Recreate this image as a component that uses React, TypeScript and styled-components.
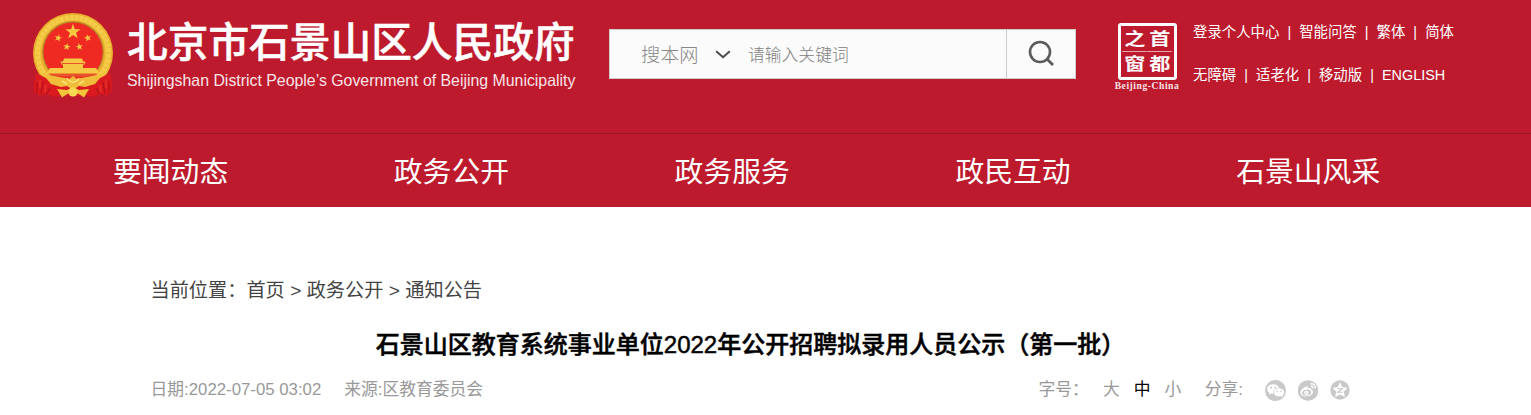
import styled, { createGlobalStyle } from 'styled-components';

const topLinks = [
    ['登录个人中心', '智能问答', '繁体', '简体'],
    ['无障碍', '适老化', '移动版', 'ENGLISH'],
];

const menus = ['要闻动态', '政务公开', '政务服务', '政民互动', '石景山风采'];

const sizes = ['大', '中', '小'];

export default function App() {
    return (
        <>
            <GlobalStyle />
            <Header>
                <TopBar>
                    <Emblem />
                    <Brand>
                        <BrandName>北京市石景山区人民政府</BrandName>
                        <BrandSub>Shijingshan District People’s Government of Beijing Municipality</BrandSub>
                    </Brand>
                    <Search>
                        <Scope>
                            搜本网
                            <svg width="16" height="9" viewBox="0 0 16 9" fill="none">
                                <path d="M1.2 1.2 8 7.2l6.8-6" stroke="#4a4a4a" strokeWidth="2" />
                            </svg>
                        </Scope>
                        <Keyword placeholder="请输入关键词" />
                        <SearchButton>
                            <svg width="28" height="28" viewBox="0 0 28 28" fill="none" stroke="#5b5b5b">
                                <circle cx="13" cy="12" r="10" strokeWidth="2.6" />
                                <path d="m20.2 19.2 5.800 5.800" strokeWidth="2.8" />
                            </svg>
                        </SearchButton>
                    </Search>
                    <Capital>
                        <Seal>
                            <SealCell>之</SealCell>
                            <SealCell>首</SealCell>
                            <SealCell>窗</SealCell>
                            <SealCell>都</SealCell>
                        </Seal>
                        <SealCaption>Beijing-China</SealCaption>
                    </Capital>
                    <Links>
                        {topLinks.map((row) => (
                            <LinkRow key={row[0]}>
                                {row.map((text) => (
                                    <LinkItem key={text}>{text}</LinkItem>
                                ))}
                            </LinkRow>
                        ))}
                    </Links>
                </TopBar>
                <Nav>
                    {menus.map((menu) => (
                        <NavItem key={menu}>{menu}</NavItem>
                    ))}
                </Nav>
            </Header>
            <Article>
                <Crumbs>当前位置：首页 &gt; 政务公开 &gt; 通知公告</Crumbs>
                <Title>石景山区教育系统事业单位2022年公开招聘拟录用人员公示（第一批）</Title>
                <Meta>
                    <span>日期:2022-07-05 03:02</span>
                    <Source>来源:区教育委员会</Source>
                    <SizeLabel>字号：</SizeLabel>
                    <Sizes>
                        {sizes.map((size) => (
                            <Size key={size} $active={size === '中'}>
                                {size}
                            </Size>
                        ))}
                    </Sizes>
                    <span>分享:</span>
                    <Share>
                        <WechatIcon />
                        <WeiboIcon />
                        <QzoneIcon />
                    </Share>
                </Meta>
            </Article>
        </>
    );
}

// 国徽
function Emblem() {
    const star = 'M0-1 .235-.324.951-.309.38.124.588.809 0 .4-.588.809-.38.124-.951-.309-.235-.324Z';

    return (
        <EmblemSvg width="82" height="88" viewBox="0 0 82 88">
            <circle cx="41" cy="41" r="40" fill="#e9b02e" />
            <circle cx="41" cy="41" r="35.5" fill="none" stroke="#f4cc48" strokeWidth="5.5" />
            <circle cx="41" cy="41" r="36" fill="none" stroke="#e3a52a" strokeWidth="5" strokeDasharray="1 4" opacity=".4" />
            <circle cx="41" cy="40" r="30.8" fill="#b98326" />
            <circle cx="41" cy="40" r="29.6" fill="#ee2a22" />
            <g fill="#f6c945">
                <path d={star} transform="translate(41 19.8) scale(8)" />
                <path d={star} transform="translate(26.2 26) rotate(15) scale(3.9)" />
                <path d={star} transform="translate(55.8 26) rotate(-15) scale(3.9)" />
                <path d={star} transform="translate(34.8 34.8) rotate(10) scale(3.9)" />
                <path d={star} transform="translate(47.4 34.8) rotate(-10) scale(3.9)" />
                <path d="M32 46.5h18l1 3h2.500l-1 3h-1.500v3.500h13l4 6.500H14l4-6.500h13v-3.500h-1.500l-1-3H31Z" />
            </g>
            <path d="M16 61.5h50l-4 3H20zM30 51h22v1H30z" fill="#e8542a" />
            <path
                d="M4 61 2 72l.5 8.5 6 3 6-2 8 3.500 8-2 11 1 11-1 8 2 8-3.500 6 2 5-3L80 72l-2-11-12 6-10 3H26l-10-3Z"
                fill="#da1a1f"
            />
            <path d="m10 61 11 3 12 2 4 1 4-3 4 3 4-1 12-2 11-3-9 11-10 3-6-1-6 4-6-4-6 1-10-3Z" fill="#efbd3a" />
            <path d="m25 77 10 1 6-3 6 3 10-1-5 8.500-6-4-5 3-5-3-6 4Z" fill="#f3c53a" />
            <path d="M35 66q2 4 6 4t6-4M30 69l5 3M52 69l-5 3" stroke="#fbe27a" strokeWidth="1.5" fill="none" />
            <circle cx="41" cy="80" r="4.5" fill="#f8d850" />
            <path
                d="M5 70v11M11 70l-2 12M18 76l-3 6M77 70v11M71 70l2 12M64 76l3 6"
                stroke="#b8121c"
                strokeWidth="1.4"
            />
            <path d="M8 68v8M14 73l-1 7M74 68v8M68 73l1 7" stroke="#ec3a2e" strokeWidth="1.2" />
        </EmblemSvg>
    );
}

function WechatIcon() {
    return (
        <svg width="21" height="21" viewBox="0 0 21 21">
            <circle cx="10.5" cy="10.5" r="10.5" fill="#c9c9c9" />
            <path
                d="M8.2 4.2c-3.3 0-6 2-6 4.8 0 1.6.9 2.9 2.3 3.8L4 14.7l2.200-1.100 2 .3C8 10 10.5 7.7 14 7.7 13.5 5.6 11.2 4.2 8.2 4.2Z"
                fill="#fff"
            />
            <ellipse cx="14" cy="12.4" rx="5.1" ry="4.2" fill="#fff" />
            <path d="m15 15.5 3 2-.6-3Z" fill="#fff" />
            <g fill="#c9c9c9">
                <circle cx="6.2" cy="7.5" r=".9" />
                <circle cx="10.2" cy="7.5" r=".9" />
                <circle cx="12.3" cy="11.3" r=".8" />
                <circle cx="15.8" cy="11.3" r=".8" />
            </g>
        </svg>
    );
}

function WeiboIcon() {
    return (
        <svg width="20" height="21" viewBox="0 0 20 21">
            <circle cx="10" cy="10.5" r="10.3" fill="#c9c9c9" />
            <path
                d="M8 6.6c1.6-.6 2.4.1 2 1.7 2.2-.8 3.7-.3 3.2 1.5 3.2 1.2 2 5-2.2 6.3-4.5 1.3-8.6-.5-8.6-3.4C2.4 10.4 5.4 7.5 8 6.6Z"
                fill="#fff"
            />
            <ellipse cx="8.6" cy="12.6" rx="4.5" ry="3" transform="rotate(-10 8.6 12.6)" fill="#c9c9c9" />
            <circle cx="8.3" cy="12.9" r="2.2" fill="#fff" />
            <circle cx="7.9" cy="13.2" r=".8" fill="#c9c9c9" />
            <path
                d="M12.5 3.8c3.2-.5 5.4 2 4.5 5M12.7 6.2c1.5-.2 2.4.8 2 2.2"
                stroke="#fff"
                strokeWidth="1.3"
                fill="none"
            />
        </svg>
    );
}

function QzoneIcon() {
    return (
        <svg width="20" height="21" viewBox="0 0 20 21">
            <circle cx="10" cy="10" r="9.7" fill="#c9c9c9" />
            <path
                d="m10 3.2 2 4.5 4.9.5-3.6 3.3 1 4.8L10 13.9l-4.3 2.4 1-4.8-3.600-3.300 4.900-.5Z"
                fill="#fff"
                stroke="#fff"
                strokeLinejoin="round"
            />
            <path d="M7.2 8.8h5l-4.400 3.500h5" stroke="#c9c9c9" strokeWidth="1.1" fill="none" />
        </svg>
    );
}

const GlobalStyle = createGlobalStyle`
    body {
        margin: 0;
        background: #fff;
        font-family: 'Liberation Sans', 'Noto Sans CJK SC', sans-serif;
    }

    * {
        box-sizing: border-box;
    }

    svg {
        display: block;
        flex: none;
    }
`;

const Header = styled.header`
    height: 207px;
    background: #bd1a2d;
    color: #fff;
`;

const TopBar = styled.div`
    height: 133px;
    display: flex;
    align-items: flex-start;
    padding-left: 32px;
`;

const EmblemSvg = styled.svg`
    margin-top: 12px;
`;

const Brand = styled.div`
    width: 482px;
    margin-left: 13px;
    padding-top: 19px;
    white-space: nowrap;
`;

const BrandName = styled.div`
    height: 48px;
    line-height: 48px;
    font-size: 40.7px;
    font-weight: 500;
    -webkit-text-stroke: 0.5px #fff;
`;

const BrandSub = styled.div`
    height: 28px;
    line-height: 28px;
    color: #f9e3e6;
    font-size: 15.86px;
`;

const Search = styled.div`
    width: 467px;
    height: 50px;
    margin-top: 29px;
    display: flex;
    background: #fbfbfb;
    border: 1px solid #ccc;
`;

const Scope = styled.div`
    width: 138px;
    padding-left: 31px;
    display: flex;
    align-items: center;
    gap: 16px;
    color: #888;
    font-size: 19.2px;
    font-weight: 300;
`;

const Keyword = styled.input`
    width: 258px;
    padding: 3px 0 0;
    border: 0;
    outline: 0;
    background: transparent;
    font-family: inherit;
    font-size: 16.8px;
    font-weight: 300;

    &::placeholder {
        color: #808080;
    }
`;

const SearchButton = styled.div`
    flex: 1;
    padding: 10px 0 0 20px;
    border-left: 1px solid #ccc;
`;

const Capital = styled.div`
    width: 66px;
    margin: 23px 0 0 38px;
    display: flex;
    flex-direction: column;
    align-items: center;
`;

// 首都之窗 印章
const Seal = styled.div`
    width: 59px;
    height: 57px;
    padding: 1px;
    display: grid;
    grid-template-columns: 1fr 1fr;
    grid-template-rows: 1fr 1fr;
    border: 3px solid #fff;
    border-radius: 3px;
`;

const SealCell = styled.span`
    height: 24.5px;
    line-height: 24px;
    text-align: center;
    font-size: 16.5px;
    font-weight: 700;
    transform: scaleX(1.28);
    background: linear-gradient(#e9a9b1, #e9a9b1) center bottom / 74% 1px no-repeat;

    &:nth-child(n + 3) {
        background: none;
    }
`;

const SealCaption = styled.div`
    margin-top: 1px;
    line-height: 10px;
    font-family: 'Liberation Serif', serif;
    font-size: 9.6px;
    font-weight: 700;
    letter-spacing: 0.55px;
    color: #f9e3e6;
    white-space: nowrap;
`;

const Links = styled.div`
    margin: 21px 0 0 13px;
    font-size: 14.4px;
`;

const LinkRow = styled.div`
    height: 43px;
    display: flex;
    line-height: 23px;
`;

const LinkItem = styled.span`
    white-space: nowrap;

    & + &::before {
        content: '|';
        display: inline-block;
        width: 19.8px;
        text-align: center;
    }
`;

const Nav = styled.nav`
    height: 74px;
    padding-left: 113px;
    display: flex;
    border-top: 1px solid #9c1425;
`;

const NavItem = styled.div`
    width: 280.8px;
    line-height: 76px;
    font-size: 28.8px;
`;

const Article = styled.main`
    width: 1200px;
    margin-left: 150.5px;
    padding-top: 70px;
`;

const Crumbs = styled.div`
    height: 28px;
    line-height: 28px;
    color: #444;
    font-size: 19.2px;
`;

const Title = styled.h1`
    height: 36px;
    margin: 22px 0 0;
    line-height: 36px;
    color: #000;
    font-size: 24px;
    font-weight: 500;
    text-align: center;
    -webkit-text-stroke: 0.5px #000;
`;

const Meta = styled.div`
    height: 24px;
    margin-top: 15px;
    display: flex;
    align-items: center;
    line-height: 24px;
    color: #999;
    font-size: 16.8px;
    white-space: nowrap;
`;

const Source = styled.span`
    margin-left: 23px;
`;

const SizeLabel = styled.span`
    margin-left: auto;
`;

const Sizes = styled.div`
    margin: 0 23.5px 0 14px;
    display: flex;
    gap: 14px;
`;

const Size = styled.span<{ $active: boolean }>`
    color: ${({ $active }) => ($active ? '#000' : '#999')};
`;

const Share = styled.div`
    margin: 0 0.5px 0 22px;
    display: flex;
    gap: 12px;
`;
